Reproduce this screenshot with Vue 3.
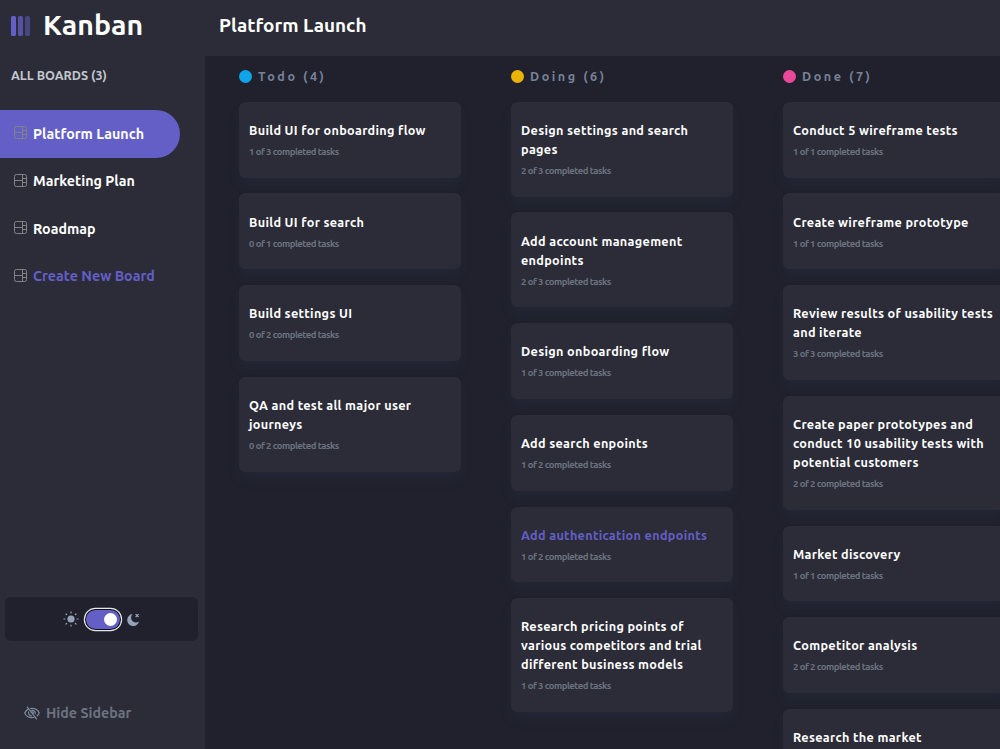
<template>
  <div class="app">
    <aside class="sidebar">
      <div class="brand">
        <svg class="logo" viewBox="0 0 19 20" aria-hidden="true">
          <rect x="0" y="0" width="5" height="20" rx="1.6" fill="#635fc7" />
          <rect x="7" y="0" width="5" height="20" rx="1.6" fill="#635fc7" opacity="0.75" />
          <rect x="14" y="0" width="5" height="20" rx="1.6" fill="#635fc7" opacity="0.5" />
        </svg>
        <h1>Kanban</h1>
      </div>

      <p class="all-boards">ALL BOARDS ({{ boards.length }})</p>

      <nav class="boards">
        <button
          v-for="item in navItems"
          :key="item.name"
          class="board-link"
          :class="{ active: item.name === current, create: item.create }"
          @click="select(item)"
        >
          <svg class="board-icon" viewBox="0 0 13 13" aria-hidden="true">
            <rect x="0.5" y="0.5" width="12" height="12" rx="1.8" />
            <path d="M8.5 0.5V12.5M0.5 6.5H8.5M8.5 4.5H12.5M8.5 8.5H12.5" />
          </svg>
          <span>{{ item.name }}</span>
        </button>
      </nav>

      <div class="theme">
        <svg class="sun" viewBox="0 0 16 16" aria-hidden="true">
          <circle cx="8" cy="8" r="3.6" />
          <path d="M8 .9v1M8 14.100v1M.9 8h1M14.100 8h1M3 3l.7 .7M12.300 12.300l.7 .7M3 13l.7-.7M12.300 3.700l.7-.7" />
        </svg>
        <button class="switch" :class="{ on: dark }" role="switch" :aria-checked="dark" @click="dark = !dark">
          <span class="knob"></span>
        </button>
        <svg class="moon" viewBox="0 0 13 13" aria-hidden="true">
          <path class="crescent" d="M5.600 1.100A6 6 0 1 0 12 8.500A4.900 4.900 0 0 1 5.600 1.100Z" />
          <path class="star" d="M8.600 1.100L11.600 4.100M11.600 1.100L8.600 4.100" />
        </svg>
      </div>

      <button class="hide">
        <svg viewBox="0 0 16 14" aria-hidden="true">
          <path d="M4.500 2.900C2.600 3.900 1.300 5.400 .7 7C2 10 4.700 11.700 8 11.700C8.900 11.700 9.700 11.600 10.500 11.300" />
          <path d="M6 2.500C6.600 2.350 7.300 2.300 8 2.300C11.300 2.300 14 4 15.300 7C14.800 8.200 13.900 9.300 12.700 10.200" />
          <path d="M4.700 5.500C4 8 5.600 10 8 10M7.200 4.400C10 3.800 12 6 11 8.300" />
          <path class="pupil" d="M7.300 5.100C8.600 4.900 10 5.800 10.200 7.900L8.800 7.500Z" />
          <path d="M3 .6L12.800 13.400" />
        </svg>
        <span>Hide Sidebar</span>
      </button>
    </aside>

    <main class="main">
      <header class="header">
        <h2>{{ current }}</h2>
      </header>

      <div class="columns">
        <section v-for="col in columns" :key="col.name" class="column">
          <div class="column-head">
            <span class="dot" :class="col.color"></span>
            <h3>{{ col.name }} ({{ col.tasks.length }})</h3>
          </div>
          <article
            v-for="task in col.tasks"
            :key="task.title"
            class="card"
            :class="{ hovered: task.title === hovered }"
          >
            <h4>{{ task.title }}</h4>
            <p>{{ task.done }} of {{ task.total }} completed tasks</p>
          </article>
        </section>
      </div>
    </main>
  </div>
</template>

<script setup>
import { ref, computed } from 'vue'

const boards = ['Platform Launch', 'Marketing Plan', 'Roadmap']
const current = ref('Platform Launch')
const hovered = ref('Add authentication endpoints')
const dark = ref(true)

const navItems = computed(() => [
  ...boards.map((name) => ({ name, create: false })),
  { name: 'Create New Board', create: true },
])

function select(item) {
  if (!item.create) current.value = item.name
}

const columns = [
  {
    name: 'Todo',
    color: 'blue',
    tasks: [
      { title: 'Build UI for onboarding flow', done: 1, total: 3 },
      { title: 'Build UI for search', done: 0, total: 1 },
      { title: 'Build settings UI', done: 0, total: 2 },
      { title: 'QA and test all major user journeys', done: 0, total: 2 },
    ],
  },
  {
    name: 'Doing',
    color: 'yellow',
    tasks: [
      { title: 'Design settings and search pages', done: 2, total: 3 },
      { title: 'Add account management endpoints', done: 2, total: 3 },
      { title: 'Design onboarding flow', done: 1, total: 3 },
      { title: 'Add search enpoints', done: 1, total: 2 },
      { title: 'Add authentication endpoints', done: 1, total: 2 },
      { title: 'Research pricing points of various competitors and trial different business models', done: 1, total: 3 },
    ],
  },
  {
    name: 'Done',
    color: 'pink',
    tasks: [
      { title: 'Conduct 5 wireframe tests', done: 1, total: 1 },
      { title: 'Create wireframe prototype', done: 1, total: 1 },
      { title: 'Review results of usability tests and iterate', done: 3, total: 3 },
      { title: 'Create paper prototypes and conduct 10 usability tests with potential customers', done: 2, total: 2 },
      { title: 'Market discovery', done: 1, total: 1 },
      { title: 'Competitor analysis', done: 2, total: 2 },
      { title: 'Research the market', done: 2, total: 2 },
    ],
  },
]
</script>

<style>
body {
  margin: 0;
  background: #20212c;
  overflow: hidden;
}
</style>

<style scoped>
.app {
  display: flex;
  width: 100vw;
  height: 100vh;
  overflow: hidden;
  background: #20212c;
  font-family: Ubuntu, 'Noto Sans', sans-serif;
  color: #fff;
}

h1,
h2,
h3,
h4,
p {
  margin: 0;
}

button {
  font: inherit;
  color: inherit;
  background: none;
  border: none;
  padding: 0;
  cursor: pointer;
}

.sidebar {
  display: flex;
  flex-direction: column;
  flex: none;
  width: 205px;
  background: #2b2c37;
}

.brand {
  display: flex;
  align-items: center;
  gap: 13px;
  height: 52px;
  padding-left: 11px;
}

.logo {
  width: 19px;
  height: 20px;
}

.brand h1 {
  padding-bottom: 4px;
  font-size: 28.500px;
  line-height: 46px;
  font-weight: 600;
}

.all-boards {
  margin-top: 13px;
  padding-left: 11px;
  font-size: 12.600px;
  line-height: 20px;
  font-weight: 600;
  color: #c3c7cf;
}

.boards {
  display: flex;
  flex-direction: column;
  margin-top: 25px;
}

.board-link {
  display: flex;
  align-items: center;
  gap: 6px;
  width: 179.500px;
  height: 47.500px;
  padding-left: 14px;
  border-radius: 0 24px 24px 0;
  box-sizing: border-box;
  font-size: 14.250px;
  font-weight: 600;
  white-space: nowrap;
}

.board-link.active {
  background: #635fc7;
}

.board-link.create {
  color: #635fc7;
}

.board-icon {
  width: 13px;
  height: 13px;
  margin-top: -2px;
  fill: none;
  stroke: #828284;
  stroke-width: 1;
}

.theme {
  display: flex;
  align-items: center;
  justify-content: center;
  gap: 5px;
  height: 44px;
  margin: auto 7px 0 5px;
  border-radius: 6px;
  background: #20212c;
}

.sun {
  width: 16px;
  height: 16px;
  fill: #94a3b8;
  stroke: #94a3b8;
  stroke-width: 1.200;
  stroke-linecap: round;
}

.sun circle {
  stroke: none;
}

.switch {
  display: flex;
  align-items: center;
  width: 34px;
  height: 19px;
  margin: 0 2px;
  padding: 0 3px;
  box-sizing: border-box;
  border-radius: 10px;
  background: #4b5563;
  box-shadow: 0 0 0 1px #101014, 0 0 0 2.200px #e5e5e5;
}

.switch.on {
  justify-content: flex-end;
  background: #635fc7;
}

.knob {
  width: 13px;
  height: 13px;
  border-radius: 50%;
  background: #fff;
}

.moon {
  width: 13px;
  height: 13px;
}

.crescent {
  fill: #94a3b8;
}

.star {
  fill: none;
  stroke: #94a3b8;
  stroke-width: 1.300;
}

.hide {
  display: flex;
  align-items: center;
  gap: 6px;
  height: 24px;
  margin: 60px 0 24px;
  padding-left: 24px;
  font-size: 14.250px;
  font-weight: 600;
  color: #6b7280;
}

.hide svg {
  width: 16px;
  height: 14px;
  fill: none;
  stroke: #7c889b;
  stroke-width: 1.200;
}

.hide .pupil {
  fill: #7c889b;
  stroke: none;
}

.main {
  display: flex;
  flex-direction: column;
  flex: 1;
  min-width: 0;
}

.header {
  flex: none;
  height: 56px;
  padding-left: 14px;
  background: #2b2c37;
}

.header h2 {
  font-size: 18.950px;
  line-height: 51px;
  font-weight: 600;
}

.columns {
  display: flex;
  flex: 1;
  gap: 50px;
  min-height: 0;
  padding: 11px 0 0 34px;
}

.column {
  display: flex;
  flex-direction: column;
  flex: none;
  gap: 15.800px;
  width: 222px;
}

.column-head {
  display: flex;
  align-items: center;
  gap: 6px;
  height: 19px;
}

.dot {
  width: 13px;
  height: 13px;
  border-radius: 50%;
}

.dot.blue {
  background: #0ea5e9;
}

.dot.yellow {
  background: #eab308;
}

.dot.pink {
  background: #ec4899;
}

.column-head h3 {
  font-size: 12.600px;
  line-height: 19px;
  font-weight: 600;
  letter-spacing: 2.530px;
  color: #77829a;
}

.card {
  flex: none;
  padding: 19.200px 10px 19px;
  box-sizing: border-box;
  border-radius: 6px;
  background: #2b2c37;
  box-shadow: 0 8px 12px rgba(54, 78, 126, 0.1);
}

.card h4 {
  font-size: 12.660px;
  line-height: 19px;
  font-weight: 600;
  letter-spacing: 0.316px;
}

.card.hovered h4 {
  color: #635fc7;
}

.card p {
  margin-top: 6px;
  font-size: 9.500px;
  line-height: 12.700px;
  font-weight: 600;
  letter-spacing: -0.475px;
  color: #6b7280;
}
</style>
